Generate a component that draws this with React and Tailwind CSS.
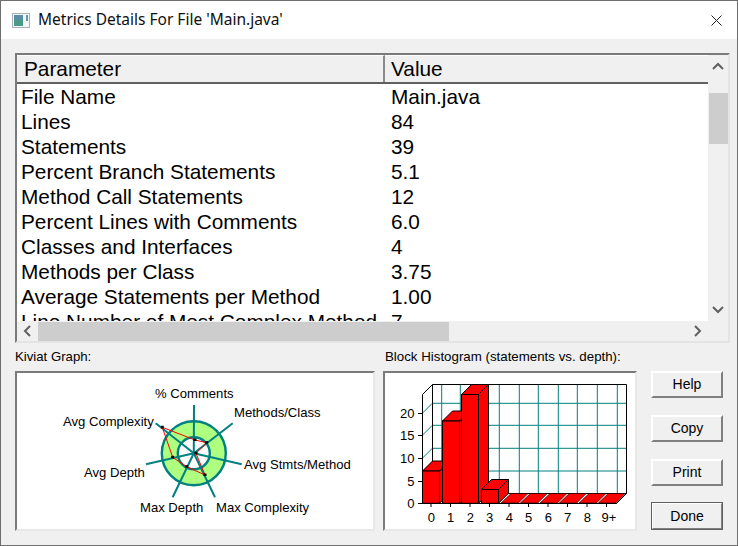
import React from "react";

const rows = [
  ["File Name", "Main.java"],
  ["Lines", "84"],
  ["Statements", "39"],
  ["Percent Branch Statements", "5.1"],
  ["Method Call Statements", "12"],
  ["Percent Lines with Comments", "6.0"],
  ["Classes and Interfaces", "4"],
  ["Methods per Class", "3.75"],
  ["Average Statements per Method", "1.00"],
  ["Line Number of Most Complex Method", "7"],
];

const sans = { fontFamily: '"Liberation Sans", Arial, sans-serif' };

function Chevron({ d }) {
  return (
    <svg width="12" height="12" viewBox="0 0 12 12" fill="none" stroke="#606060" strokeWidth="2">
      <path d={d} />
    </svg>
  );
}

function Kiviat() {
  const c = [193.8, 453.3];
  const spokes = [[194, 405], [232.7, 423.3], [241.7, 464.3], [215, 497.3], [172.7, 497.3], [146, 464.3], [155.7, 423.3]];
  const pts = [[195, 440], [206.7, 442.7], [196, 453.3], [205, 475], [186.7, 466.7], [172.7, 457.3], [162.3, 427.3]];
  const labels = [
    [155, 398, "% Comments"],
    [234, 417, "Methods/Class"],
    [244, 469, "Avg Stmts/Method"],
    [216, 512, "Max Complexity"],
    [140, 512, "Max Depth"],
    [84, 477, "Avg Depth"],
    [63, 426, "Avg Complexity"],
  ];
  return (
    <svg width="356" height="156" viewBox="17 373 356 156" className="block">
      <circle cx={c[0]} cy={c[1]} r="24" fill="none" stroke="#aeff80" strokeWidth="17" />
      <circle cx={c[0]} cy={c[1]} r="32" fill="none" stroke="#008080" strokeWidth="2.4" />
      <circle cx={c[0]} cy={c[1]} r="16" fill="none" stroke="#008080" strokeWidth="2.4" />
      {spokes.map(([x, y], i) => (
        <line key={i} x1={c[0]} y1={c[1]} x2={x} y2={y} stroke="#008080" strokeWidth="2" />
      ))}
      <polygon points={pts.map((p) => p.join(",")).join(" ")} fill="none" stroke="#ff0000" strokeWidth="1" />
      {pts.map(([x, y], i) => (
        <rect key={i} x={x - 1.5} y={y - 1.5} width="3" height="2.5" fill="#000" />
      ))}
      {labels.map(([x, y, t]) => (
        <text key={t} x={x} y={y} fontSize="13.1" fill="#000" style={sans}>{t}</text>
      ))}
    </svg>
  );
}

function Bar3D({ x, w, top }) {
  const b = 503.3, d = 10;
  return (
    <g fill="#ff0000" stroke="#000" strokeWidth="1">
      <polygon points={`${x + w},${top} ${x + w + d},${top - d} ${x + w + d},${b - d} ${x + w},${b}`} />
      <polygon points={`${x},${top} ${x + d},${top - d} ${x + w + d},${top - d} ${x + w},${top}`} />
      <rect x={x} y={top} width={w} height={b - top} />
    </g>
  );
}

function Histogram() {
  const back = [441.7, 460.3, 480, 499.3, 519.3, 538.3, 558.3, 577.3, 597.3, 617.3];
  const hs = [403.3, 425.3, 448.3, 471];
  const flat = [501, 520.3, 540, 559.3, 579, 598.3];
  const xl = [[431.3, "0"], [450.7, "1"], [470.3, "2"], [489.7, "3"], [509.3, "4"], [528.7, "5"], [548.3, "6"], [567.7, "7"], [587.3, "8"], [609, "9+"]];
  const yl = [[503, "0"], [481, "5"], [458, "10"], [435, "15"], [413, "20"]];
  return (
    <svg width="250" height="156" viewBox="385 373 250 156" className="block">
      {back.map((x) => <line key={x} x1={x} y1="384.3" x2={x} y2="493.3" stroke="#008080" strokeWidth="1" />)}
      {hs.map((y) => (
        <g key={y} stroke="#008080" strokeWidth="1">
          <line x1="432.3" y1={y} x2="626.7" y2={y} />
          <line x1="422.3" y1={y + 10} x2="432.3" y2={y} />
        </g>
      ))}
      <g stroke="#000" strokeWidth="1" fill="none">
        <path d="M432.5 493.5V384.5H626.5V493.5H432.5" />
        <path d="M422.5 503.5V394.5L432.5 384.5" />
        <path d="M422.5 503.5H616.5L626.5 493.5" />
      </g>
      <Bar3D x={422.5} w={17} top={471} />
      <Bar3D x={442.5} w={17} top={421} />
      <Bar3D x={461.5} w={17} top={394.5} />
      <Bar3D x={481.5} w={17} top={489.5} />
      {flat.map((x) => (
        <polygon key={x} points={`${x},503 ${x + 10},493.5 ${x + 27},493.5 ${x + 17.5},503`} fill="#ff0000" stroke="#000" strokeWidth="0.6" />
      ))}
      <path d="M422.5 503.5H616.5" stroke="#000" strokeWidth="1" />
      {[431, 450.5, 470, 489.5, 509, 528.5, 548, 567.5, 587, 606.5].map((x) => (
        <line key={x} x1={x} y1="503" x2={x} y2="507" stroke="#000" strokeWidth="1" />
      ))}
      {[413.5, 435.5, 458.5, 481.5, 503.5].map((y) => (
        <line key={y} x1="418" y1={y} x2="422" y2={y} stroke="#000" strokeWidth="1" />
      ))}
      {xl.map(([x, t]) => <text key={t} x={x} y="521.5" fontSize="13" textAnchor="middle" fill="#000" style={sans}>{t}</text>)}
      {yl.map(([y, t]) => <text key={t} x="414.5" y={y + 5} fontSize="13" textAnchor="end" fill="#000" style={sans}>{t}</text>)}
    </svg>
  );
}

function Btn({ children, def }) {
  return (
    <div
      className={
        "w-[72px] flex items-center justify-center text-[14px] text-black bg-[#f0f0f0] border-t-2 border-l-2 border-t-white border-l-white border-b-2 border-r-2 border-b-[#808080] border-r-[#808080] " +
        (def ? "h-[28px] -mt-[1px] outline outline-1 -outline-offset-1 outline-[#606060]" : "h-[27px]")
      }
    >
      {children}
    </div>
  );
}

function Sunken({ className, children }) {
  return (
    <div className={"border-2 border-t-[#7a7a7a] border-l-[#7a7a7a] border-b-[#e8e8e8] border-r-[#e8e8e8] bg-white overflow-hidden " + className}>
      {children}
    </div>
  );
}

export default function App() {
  return (
    <div className="w-[738px] h-[546px] flex flex-col bg-[#f0f0f0] border border-[#6e6e6e] overflow-hidden" style={sans}>
      <div className="h-[38px] shrink-0 bg-white flex items-center pl-[11px] pr-[15px]">
        <svg width="18" height="15" viewBox="0 0 18 15" className="shrink-0">
          <rect x="0.5" y="0.5" width="17" height="14" fill="#f4f6f8" stroke="#a8b0b8" />
          <rect x="2" y="2" width="9" height="11" fill="#4a9a88" />
          <rect x="2" y="2" width="9" height="5" fill="#5a8ea8" />
          <rect x="14" y="2" width="2" height="6" fill="#5a9ab0" />
        </svg>
        <span className="ml-[8px] text-[15.5px] leading-none text-[#101010] whitespace-nowrap" style={{ fontFamily: '"Noto Sans", sans-serif' }}>
          Metrics Details For File 'Main.java'
        </span>
        <svg width="11" height="11" viewBox="0 0 11 11" className="ml-auto" fill="none" stroke="#222" strokeWidth="1">
          <path d="M0.5 0.5L10.5 10.5M10.5 0.5L0.5 10.5" />
        </svg>
      </div>

      <div className="flex-1 flex flex-col pt-[14px] pl-[14px] pr-[7px]">
        <div className="w-[715px] h-[290px] border-2 border-t-[#7a7a7a] border-l-[#7a7a7a] border-b-[#e4e4e4] border-r-[#e4e4e4] flex flex-col bg-[#f0f0f0]">
          <div className="flex h-[266px]">
            <div className="w-[691px] flex flex-col text-[20.8px] text-black">
              <div className="h-[29px] shrink-0 flex border-b-2 border-[#606060]">
                <div className="w-[368px] pl-[7px] flex items-center border-r-2 border-[#8a8a8a] border-t border-t-white">Parameter</div>
                <div className="flex-1 pl-[6px] flex items-center border-t border-t-white">Value</div>
              </div>
              <div className="flex-1 bg-white overflow-hidden pt-[1px]">
                {rows.map(([a, b]) => (
                  <div key={a} className="h-[25px] flex items-center leading-none whitespace-nowrap">
                    <div className="w-[374px] pl-[4px] shrink-0">{a}</div>
                    <div>{b}</div>
                  </div>
                ))}
              </div>
            </div>
            <div className="w-[20px] flex flex-col items-center">
              <div className="h-[20px] pt-[6px] flex items-start justify-center"><Chevron d="M1 8L6 3L11 8" /></div>
              <div className="mt-[18px] w-[19px] h-[51px] bg-[#cdcdcd]" />
              <div className="mt-auto h-[20px] pb-[4px] flex items-center justify-center"><Chevron d="M1 4L6 9L11 4" /></div>
            </div>
          </div>
          <div className="h-[20px] flex items-center">
            <div className="w-[21px] flex items-center justify-center"><Chevron d="M8 1L3 6L8 11" /></div>
            <div className="w-[411px] h-[19px] bg-[#cdcdcd]" />
            <div className="ml-auto w-[62px] flex items-center justify-center"><Chevron d="M4 1L9 6L4 11" /></div>
          </div>
        </div>

        <div className="flex mt-[6px]">
          <div className="w-[368px] shrink-0">
            <div className="h-[16px] flex items-center text-[13.2px] text-black">Kiviat Graph:</div>
            <Sunken className="w-[360px] h-[160px] mt-[6px]"><Kiviat /></Sunken>
          </div>
          <div className="w-[268px] shrink-0">
            <div className="h-[16px] pl-[2px] flex items-center text-[13.3px] text-black">Block Histogram (statements vs. depth):</div>
            <Sunken className="w-[254px] h-[160px] mt-[6px]"><Histogram /></Sunken>
          </div>
          <div className="flex flex-col pt-[22px] gap-[17px]">
            <Btn>Help</Btn>
            <Btn>Copy</Btn>
            <Btn>Print</Btn>
            <Btn def>Done</Btn>
          </div>
        </div>
      </div>
    </div>
  );
}
